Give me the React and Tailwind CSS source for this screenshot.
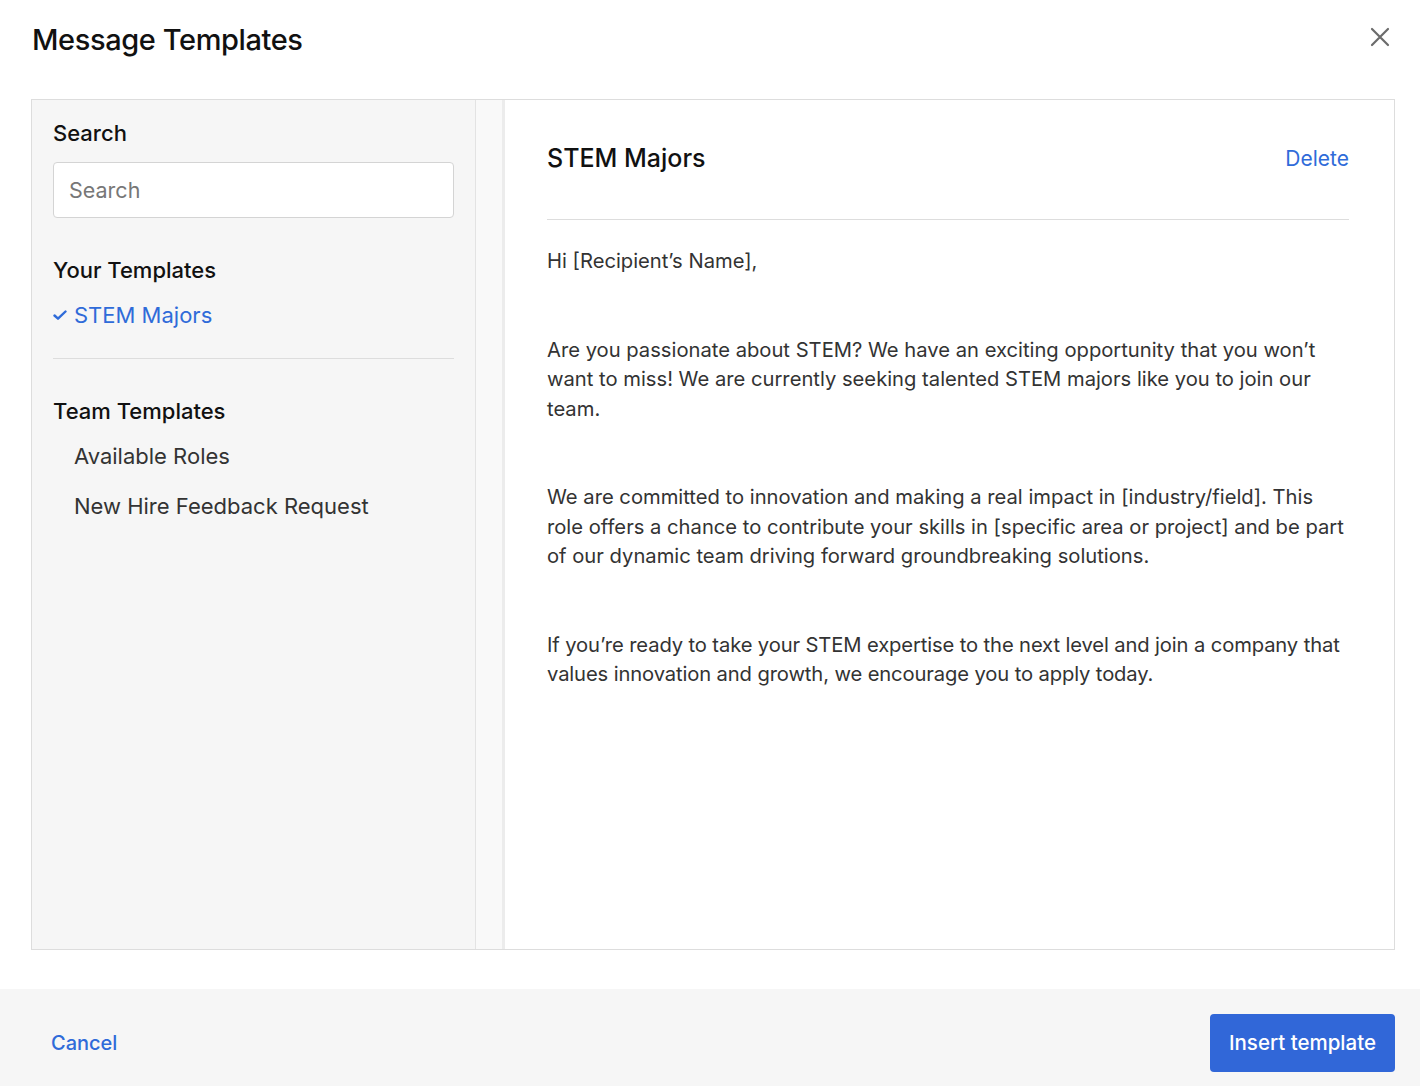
import React from "react";

const font = { fontFamily: "Inter, 'Noto Sans', sans-serif" };

function CheckIcon() {
  return (
    <svg width="14" height="14" viewBox="0 0 14 14" fill="none" className="shrink-0">
      <path d="M1.5 7.5l3.5 3.2 7.5-7.2" stroke="#2f6bd9" strokeWidth="2.4" strokeLinecap="round" strokeLinejoin="round" />
    </svg>
  );
}

function CloseIcon() {
  return (
    <svg width="20" height="20" viewBox="0 0 20 20" fill="none">
      <path d="M2 2l16 16M18 2L2 18" stroke="#6b6b6b" strokeWidth="2.2" strokeLinecap="round" />
    </svg>
  );
}

export default function App() {
  const paragraphs = [
    { text: "Hi [Recipient’s Name],", cls: "" },
    { text: "Are you passionate about STEM? We have an exciting opportunity that you won’t want to miss! We are currently seeking talented STEM majors like you to join our team.", cls: "" },
    { text: "We are committed to innovation and making a real impact in [industry/field]. This role offers a chance to contribute your skills in [specific area or project] and be part of our dynamic team driving forward groundbreaking solutions.", cls: "" },
    { text: "If you’re ready to take your STEM expertise to the next level and join a company that values innovation and growth, we encourage you to apply today.", cls: "tracking-[-0.12px]" },
  ];

  return (
    <div className="w-[1420px] h-[1086px] bg-white flex flex-col text-[#111]" style={font}>
      {/* Header */}
      <div className="flex items-start justify-between pl-[32px] pr-[30px] pt-[21px] h-[99px]">
        <h1 className="text-[29px] font-medium tracking-[-0.4px] leading-[38px]">Message Templates</h1>
        <button className="mt-[6px]">
          <CloseIcon />
        </button>
      </div>

      {/* Body */}
      <div className="mx-[31px] mr-[25px] h-[851px] border border-[#dddddd] flex">
        {/* Sidebar */}
        <div className="w-[444px] bg-[#f6f6f6] border-r border-[#e3e3e3] px-[21px] pt-[19px]">
          <div className="text-[22px] font-medium leading-[28px]">Search</div>
          <input
            placeholder="Search"
            className="mt-[15px] w-full h-[56px] bg-white border border-[#d4d4d4] rounded-[4px] px-[15px] text-[21.5px] text-[#333] placeholder:text-[#777] outline-none"
            style={font}
          />
          <div className="mt-[38px] text-[22px] font-medium leading-[28px]">Your Templates</div>
          <div className="mt-[17px] flex items-center gap-[7px] text-[22px] text-[#2f6bd9] leading-[28px]">
            <CheckIcon />
            <span>STEM Majors</span>
          </div>
          <div className="mt-[29px] border-t border-[#dddddd]" />
          <div className="mt-[38px] text-[22px] font-medium leading-[28px]">Team Templates</div>
          <div className="mt-[17px] pl-[21px] text-[22px] text-[#333] leading-[28px]">Available Roles</div>
          <div className="mt-[22px] pl-[21px] text-[22px] text-[#333] leading-[28px]">New Hire Feedback Request</div>
        </div>

        {/* Divider strip */}
        <div className="w-[29px] bg-[#f9f9f9] border-r-[3px] border-[#ececec]" />

        {/* Preview */}
        <div className="flex-1 bg-white px-[42px] pr-[45px]">
          <div className="flex items-center justify-between h-[120px] border-b border-[#dddddd]">
            <h2 className="text-[25px] font-medium leading-[32px] -mt-[4px]">STEM Majors</h2>
            <button className="text-[21px] text-[#2f6bd9] -mt-[2px]">Delete</button>
          </div>
          <div className="pt-[26px] text-[20.2px] leading-[29.5px] text-[#333]">
            {paragraphs.map((p, i) => (
              <p key={i} className={"mb-[59px] " + p.cls}>{p.text}</p>
            ))}
          </div>
        </div>
      </div>

      {/* Footer */}
      <div className="mt-[39px] flex-1 bg-[#f6f6f6] flex items-start justify-between pl-[51px] pr-[25px] pt-[25px]">
        <button className="h-[58px] text-[20px] text-[#2f6bd9] font-medium">Cancel</button>
        <button className="h-[58px] px-[19px] rounded-[4px] bg-[#3167d8] text-white text-[20.5px] font-medium">
          Insert template
        </button>
      </div>
    </div>
  );
}
